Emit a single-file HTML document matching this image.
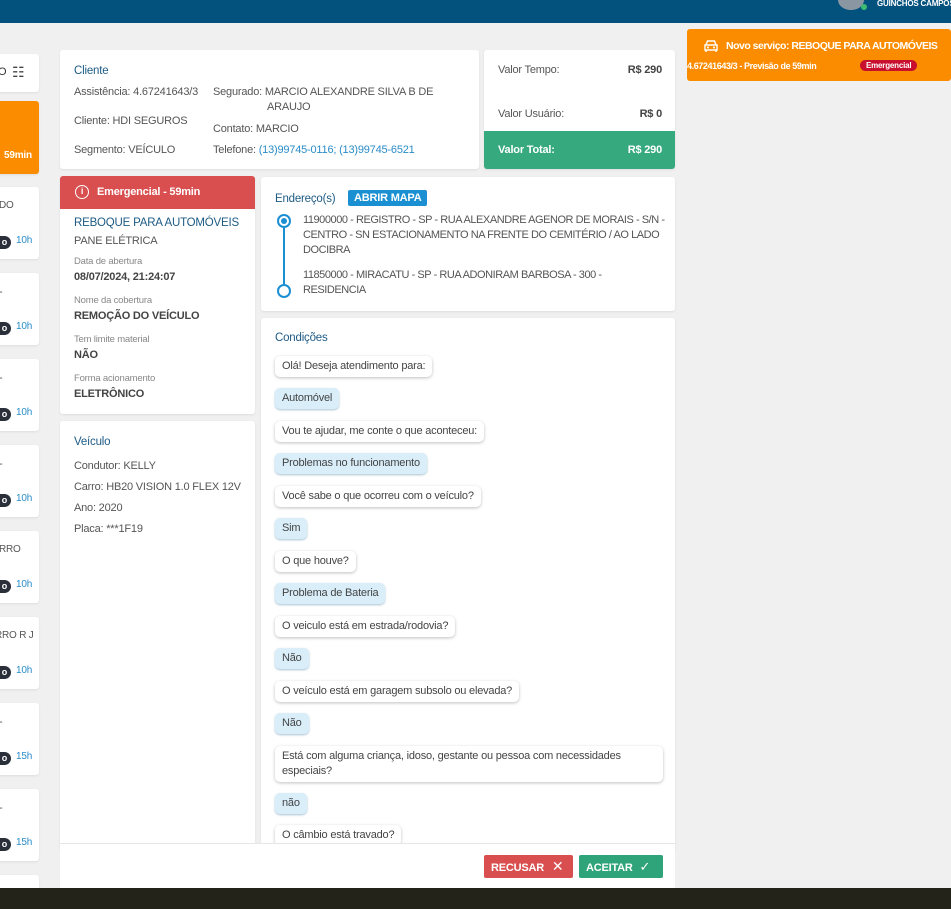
<!DOCTYPE html>
<html><head><meta charset="utf-8"><style>
*{box-sizing:border-box;margin:0;padding:0}
body{width:951px;height:909px;overflow:hidden;background:#f0f0f0;font-family:"Liberation Sans",sans-serif;font-size:11px;color:#555;position:relative;letter-spacing:-0.2px}
.a{position:absolute}
.card{position:absolute;background:#fff;border-radius:3px;box-shadow:0 1px 2px rgba(0,0,0,.08)}
.t{color:#1d5b85;font-size:11.5px}
.b{font-weight:bold;color:#444}
.s{font-size:9.5px;color:#888}
.bub{position:absolute;left:14px;height:21px;line-height:21px;padding:0 7px;border-radius:5px;background:#fff;box-shadow:0 1px 3px rgba(0,0,0,.25);font-size:11px;color:#444;white-space:nowrap}
.ans{background:#d9eef9;box-shadow:0 1px 2px rgba(0,80,130,.35)}
.pill{position:absolute;width:22px;height:13px;border-radius:7px;background:#2a2f3a;color:#fff;font-size:9px;font-weight:bold;line-height:13px;text-align:right;padding-right:4px}
.hr{position:absolute;color:#2a8cc8;font-size:10px}
</style></head><body>
<div class="a" style="left:0;top:0;width:951px;height:23px;background:#03527e"></div>
<div class="a" style="left:838px;top:-10px;width:26px;height:20px;border-radius:50%;background:#8a97a3"></div>
<div class="a" style="left:861px;top:4px;width:6px;height:6px;border-radius:50%;background:#3dbb6f"></div>
<div class="a" style="left:877px;top:-1px;color:#fff;font-size:8px;font-weight:bold;white-space:nowrap">GUINCHOS CAMPOS</div>

<!-- sidebar -->
<div class="card" style="left:-5px;top:54px;width:44px;height:38px"><span class="a" style="left:3px;top:12px;color:#333">O</span><span class="a" style="left:17px;top:10px;font-size:14px;color:#444">☷</span></div>
<div class="card" style="left:-5px;top:101px;width:44px;height:73px;background:#fb8c00"><span class="a" style="left:9px;top:49px;color:#fff;font-weight:bold;font-size:10px">59min</span></div>
<div class="card" style="left:-5px;top:187px;width:44px;height:72px"><span class="a" style="left:4px;top:13px;font-size:10px">DO</span><div class="pill" style="top:49px;left:-6px">o</div><span class="hr" style="top:48px;left:21px">10h</span></div>
<div class="card" style="left:-5px;top:273px;width:44px;height:72px"><span class="a" style="left:4px;top:13px">-</span><div class="pill" style="top:49px;left:-6px">o</div><span class="hr" style="top:48px;left:21px">10h</span></div>
<div class="card" style="left:-5px;top:359px;width:44px;height:72px"><span class="a" style="left:4px;top:13px">-</span><div class="pill" style="top:49px;left:-6px">o</div><span class="hr" style="top:48px;left:21px">10h</span></div>
<div class="card" style="left:-5px;top:445px;width:44px;height:72px"><span class="a" style="left:4px;top:13px">-</span><div class="pill" style="top:49px;left:-6px">o</div><span class="hr" style="top:48px;left:21px">10h</span></div>
<div class="card" style="left:-5px;top:531px;width:44px;height:72px"><span class="a" style="left:4px;top:13px;font-size:10px">RRO</span><div class="pill" style="top:49px;left:-6px">o</div><span class="hr" style="top:48px;left:21px">10h</span></div>
<div class="card" style="left:-5px;top:617px;width:44px;height:72px"><span class="a" style="left:0px;top:13px;font-size:10px;white-space:nowrap">RRO R J</span><div class="pill" style="top:49px;left:-6px">o</div><span class="hr" style="top:48px;left:21px">10h</span></div>
<div class="card" style="left:-5px;top:703px;width:44px;height:72px"><span class="a" style="left:4px;top:13px">-</span><div class="pill" style="top:49px;left:-6px">o</div><span class="hr" style="top:48px;left:21px">15h</span></div>
<div class="card" style="left:-5px;top:789px;width:44px;height:72px"><span class="a" style="left:4px;top:13px">-</span><div class="pill" style="top:49px;left:-6px">o</div><span class="hr" style="top:48px;left:21px">15h</span></div>
<div class="card" style="left:-5px;top:875px;width:44px;height:30px"></div>

<!-- cliente -->
<div class="card" style="left:60px;top:50px;width:419px;height:119px">
<div class="a t" style="left:14px;top:15px">Cliente</div>
<div class="a" style="left:14px;top:36px">Assistência: 4.67241643/3</div>
<div class="a" style="left:14px;top:65px">Cliente: HDI SEGUROS</div>
<div class="a" style="left:14px;top:94px">Segmento: VEÍCULO</div>
<div class="a" style="left:153px;top:36px">Segurado: MARCIO ALEXANDRE SILVA B DE</div>
<div class="a" style="left:207px;top:51px">ARAUJO</div>
<div class="a" style="left:153px;top:73px">Contato: MARCIO</div>
<div class="a" style="left:153px;top:94px">Telefone: <span style="color:#2a8cc8">(13)99745-0116; (13)99745-6521</span></div>
</div>

<!-- valores -->
<div class="card" style="left:484px;top:50px;width:191px;height:119px;overflow:hidden">
<div class="a" style="left:14px;top:14px">Valor Tempo:</div><div class="a b" style="right:13px;top:14px">R$ 290</div>
<div class="a" style="left:14px;top:58px">Valor Usuário:</div><div class="a b" style="right:13px;top:58px">R$ 0</div>
<div class="a" style="left:0;top:81px;width:191px;height:38px;background:#36a97f;color:#fff;font-weight:bold"><span class="a" style="left:14px;top:13px">Valor Total:</span><span class="a" style="right:13px;top:13px">R$ 290</span></div>
</div>

<!-- toast -->
<div class="a" style="left:687px;top:29px;width:264px;height:52px;background:#fb8c00;border-radius:3px;color:#fff;font-weight:bold;overflow:hidden">
<svg class="a" style="left:16px;top:10px" width="16" height="14" viewBox="0 0 16 14"><path d="M3 6 L4.5 2 H11.5 L13 6 M2 6 H14 V11 H2 Z M3 11 V13 M13 11 V13" fill="none" stroke="#fff" stroke-width="1.4"/><circle cx="5" cy="8.5" r="1" fill="#fff"/><circle cx="11" cy="8.5" r="1" fill="#fff"/></svg>
<div class="a" style="left:39px;top:11px;font-size:10.5px;letter-spacing:-0.5px;white-space:nowrap">Novo serviço: REBOQUE PARA AUTOMÓVEIS</div>
<div class="a" style="left:0px;top:32px;font-size:9px;letter-spacing:-0.4px;white-space:nowrap">4.67241643/3 - Previsão de 59min</div>
<div class="a" style="left:173px;top:31px;font-size:8px;background:#c8102e;border-radius:7px;padding:1px 6px">Emergencial</div>
</div>

<!-- emergencial -->
<div class="card" style="left:60px;top:176px;width:195px;height:238px;overflow:hidden">
<div class="a" style="left:0;top:0;width:195px;height:33px;background:#d94f4f;color:#fff;font-weight:bold"><span class="a" style="left:15px;top:9px;width:14px;height:14px;border:1.5px solid #fff;border-radius:50%;font-size:9px;text-align:center;line-height:11px">i</span><span class="a" style="left:37px;top:10px">Emergencial - 59min</span></div>
<div class="a t" style="left:14px;top:41px">REBOQUE PARA AUTOMÓVEIS</div>
<div class="a" style="left:14px;top:59px">PANE ELÉTRICA</div>
<div class="a s" style="left:14px;top:80px">Data de abertura</div>
<div class="a b" style="left:14px;top:95px">08/07/2024, 21:24:07</div>
<div class="a s" style="left:14px;top:119px">Nome da cobertura</div>
<div class="a b" style="left:14px;top:134px">REMOÇÃO DO VEÍCULO</div>
<div class="a s" style="left:14px;top:158px">Tem limite material</div>
<div class="a b" style="left:14px;top:173px">NÃO</div>
<div class="a s" style="left:14px;top:197px">Forma acionamento</div>
<div class="a b" style="left:14px;top:212px">ELETRÔNICO</div>
</div>

<!-- veiculo -->
<div class="card" style="left:60px;top:421px;width:195px;height:430px">
<div class="a t" style="left:14px;top:15px">Veículo</div>
<div class="a" style="left:14px;top:39px">Condutor: KELLY</div>
<div class="a" style="left:14px;top:60px">Carro: HB20 VISION 1.0 FLEX 12V</div>
<div class="a" style="left:14px;top:81px">Ano: 2020</div>
<div class="a" style="left:14px;top:102px">Placa: ***1F19</div>
</div>

<!-- endereco -->
<div class="card" style="left:261px;top:177px;width:414px;height:134px">
<div class="a t" style="left:14px;top:16px">Endereço(s)</div>
<div class="a" style="left:87px;top:13px;background:#1a8fd1;color:#fff;font-weight:bold;padding:2px 6px;border-radius:2px">ABRIR MAPA</div>
<div class="a" style="left:16px;top:37px;width:14px;height:14px;border:2px solid #1a8fd1;border-radius:50%"></div>
<div class="a" style="left:20px;top:41px;width:6px;height:6px;background:#1a8fd1;border-radius:50%"></div>
<div class="a" style="left:22px;top:51px;width:2px;height:56px;background:#1a8fd1"></div>
<div class="a" style="left:16px;top:107px;width:14px;height:14px;border:2px solid #1a8fd1;border-radius:50%"></div>
<div class="a" style="left:42px;top:36px;width:365px;line-height:15px;letter-spacing:-0.45px">11900000 - REGISTRO - SP - RUA ALEXANDRE AGENOR DE MORAIS - S/N - CENTRO - SN ESTACIONAMENTO NA FRENTE DO CEMITÉRIO / AO LADO DOCIBRA</div>
<div class="a" style="left:42px;top:91px;width:330px;line-height:15px;letter-spacing:-0.45px">11850000 - MIRACATU - SP - RUA ADONIRAM BARBOSA - 300 - RESIDENCIA</div>
</div>

<!-- condicoes -->
<div class="card" style="left:261px;top:318px;width:414px;height:533px;overflow:hidden">
<div class="a t" style="left:14px;top:14px">Condições</div>
<div class="bub" style="top:38px">Olá! Deseja atendimento para:</div>
<div class="bub ans" style="top:70px">Automóvel</div>
<div class="bub" style="top:103px">Vou te ajudar, me conte o que aconteceu:</div>
<div class="bub ans" style="top:135px">Problemas no funcionamento</div>
<div class="bub" style="top:168px">Você sabe o que ocorreu com o veículo?</div>
<div class="bub ans" style="top:200px">Sim</div>
<div class="bub" style="top:233px">O que houve?</div>
<div class="bub ans" style="top:265px">Problema de Bateria</div>
<div class="bub" style="top:298px">O veiculo está em estrada/rodovia?</div>
<div class="bub ans" style="top:330px">Não</div>
<div class="bub" style="top:363px">O veículo está em garagem subsolo ou elevada?</div>
<div class="bub ans" style="top:395px">Não</div>
<div class="bub" style="top:428px;width:388px;height:36px;line-height:15px;padding-top:3px;white-space:normal">Está com alguma criança, idoso, gestante ou pessoa com necessidades especiais?</div>
<div class="bub ans" style="top:475px">não</div>
<div class="bub" style="top:507px">O câmbio está travado?</div>
</div>

<!-- footer -->
<div class="a" style="left:60px;top:843px;width:615px;height:45px;background:#fff;border-top:1px solid #e6e6e6"></div>
<div class="a" style="left:484px;top:855px;width:89px;height:23px;background:#d94f4f;border-radius:2px;color:#fff;font-weight:bold;line-height:23px;padding-left:7px">RECUSAR <span style="font-weight:normal;font-size:14px;margin-left:5px">✕</span></div>
<div class="a" style="left:579px;top:855px;width:84px;height:23px;background:#2fa37a;border-radius:2px;color:#fff;font-weight:bold;line-height:23px;padding-left:7px">ACEITAR <span style="font-weight:normal;font-size:13px;margin-left:4px">✓</span></div>

<div class="a" style="left:0;top:888px;width:951px;height:21px;background:#23231a"></div>
</body></html>
